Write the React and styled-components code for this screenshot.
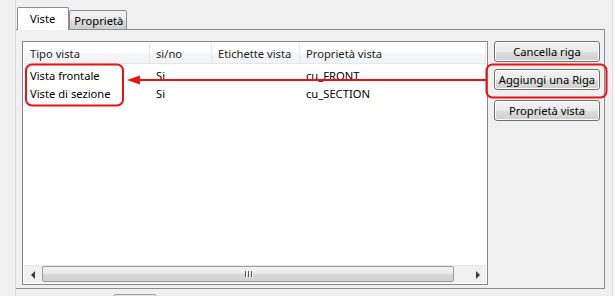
import React from "react";
import styled, { createGlobalStyle } from "styled-components";

const GlobalStyle = createGlobalStyle`
  html, body {
    margin: 0;
    padding: 0;
    background: #f0f0f0;
  }
  body {
    font-family: "Noto Sans", "Liberation Sans", sans-serif;
    font-size: 11.2px;
    color: #000;
  }
`;

const columns = [
  { title: "Tipo vista", width: 126 },
  { title: "si/no", width: 62 },
  { title: "Etichette vista", width: 88 },
  { title: "Proprietà vista", width: 0 },
];

const rows = [
  ["Vista frontale", "Si", "", "cu_FRONT"],
  ["Viste di sezione", "Si", "", "cu_SECTION"],
];

const App = () => {
  return (
    <>
      <GlobalStyle />
      <Frame>
        <TabBar>
          <Tab active>Viste</Tab>
          <Tab>Proprietà</Tab>
        </TabBar>
        <Panel>
          <Grid>
            <HeaderRow>
              {columns.map((c) => (
                <HeaderCell key={c.title} $w={c.width}>
                  {c.title}
                </HeaderCell>
              ))}
            </HeaderRow>
            {rows.map((r) => (
              <Row key={r[0]}>
                {r.map((v, i) => (
                  <Cell key={i} $w={columns[i].width}>
                    {v}
                  </Cell>
                ))}
              </Row>
            ))}
            <Filler />
            <HScroll>
              <ArrowBtn>
                <ArrowLeft />
              </ArrowBtn>
              <Thumb>
                <Grip>
                  <i />
                  <i />
                  <i />
                </Grip>
              </Thumb>
              <Track />
              <ArrowBtn>
                <ArrowRight />
              </ArrowBtn>
            </HScroll>
          </Grid>
          <Buttons>
            <Button>Cancella riga</Button>
            <Button $mt={7}>Aggiungi una Riga</Button>
            <Button $mt={10}>Proprietà vista</Button>
          </Buttons>
        </Panel>
        <BottomBar>
          <HiddenButton />
        </BottomBar>
        <Overlay width="614" height="296" viewBox="0 0 614 296">
          <rect x="26" y="64.5" width="97" height="41" rx="6" fill="none" stroke="#ee1111" strokeWidth="2" />
          <rect x="486.5" y="64.5" width="120" height="33" rx="6" fill="none" stroke="#ee1111" strokeWidth="2" />
          <line x1="137" y1="80" x2="486" y2="80" stroke="#ee1111" strokeWidth="2" />
          <polygon points="127,80 140,75.5 140,84.5" fill="#ee1111" />
        </Overlay>
      </Frame>
    </>
  );
};

export default App;

const Frame = styled.div`
  position: relative;
  width: 614px;
  height: 296px;
  box-sizing: border-box;
  padding: 7px 0 0 15px;
  overflow: hidden;
  display: flex;
  flex-direction: column;

  &::before {
    content: "";
    position: absolute;
    left: 15px;
    top: 0;
    bottom: 0;
    width: 1px;
    background: #d9d9d9;
  }

  &::after {
    content: "";
    position: absolute;
    right: 1px;
    top: 0;
    bottom: 0;
    width: 1px;
    background: #dfe3e8;
  }
`;

const TabBar = styled.div`
  display: flex;
  align-items: flex-end;
  height: 23px;
  flex-shrink: 0;
  padding-left: 2px;
  position: relative;
  z-index: 1;
  margin-bottom: -1px;
`;

const Tab = styled.div`
  box-sizing: border-box;
  height: ${(p) => (p.active ? "23px" : "20px")};
  padding: ${(p) => (p.active ? "3px 13px 0 12px" : "2px 3px 0 4px")};
  border: 1px solid #898c95;
  border-bottom: ${(p) => (p.active ? "none" : "1px solid #898c95")};
  border-radius: 2px 2px 0 0;
  background: ${(p) =>
    p.active ? "#ffffff" : "linear-gradient(#f3f3f3, #ebebeb 50%, #dddddd 51%, #cfcfcf)"};
  margin-left: ${(p) => (p.active ? "0" : "-1px")};
  margin-right: ${(p) => (p.active ? "1px" : "0")};
  color: #000;
  line-height: 16px;
`;

const Panel = styled.div`
  box-sizing: border-box;
  width: 590px;
  height: 260px;
  flex-shrink: 0;
  border: 1px solid #898c95;
  border-left: 1px solid #d9d9d9;
  background: #f0f0f0;
  display: flex;
  padding: 11px 0 0 6px;
  gap: 6px;
`;

const Grid = styled.div`
  box-sizing: border-box;
  width: 466px;
  height: 244px;
  border: 1px solid #828790;
  background: #fff;
  display: flex;
  flex-direction: column;
  padding: 1px;
`;

const HeaderRow = styled.div`
  display: flex;
  height: 20px;
  background: linear-gradient(#ffffff, #ffffff 50%, #f4f5f7 51%, #f3f4f6);
  border-bottom: 1px solid #e4e6ea;
`;

const HeaderCell = styled.div`
  box-sizing: border-box;
  ${(p) => (p.$w ? `width: ${p.$w}px;` : "flex: 1;")}
  padding-left: 6px;
  line-height: 21px;
  border-right: 1px solid #e3e5e8;
  color: #1e1e1e;
  white-space: nowrap;
`;

const Row = styled.div`
  display: flex;
  height: 18px;
`;

const Cell = styled.div`
  box-sizing: border-box;
  ${(p) => (p.$w ? `width: ${p.$w}px;` : "flex: 1;")}
  padding: 2px 0 0 6px;
  line-height: 20px;
  white-space: nowrap;
`;

const Filler = styled.div`
  flex: 1;
`;

const HScroll = styled.div`
  display: flex;
  height: 17px;
  background: #f0f0f0;
  border-top: 1px solid #e6e6e6;
`;

const ArrowBtn = styled.div`
  width: 17px;
  display: flex;
  align-items: center;
  justify-content: center;
`;

const ArrowLeft = styled.span`
  width: 0;
  height: 0;
  border-top: 4px solid transparent;
  border-bottom: 4px solid transparent;
  border-right: 4px solid #3c3c3c;
`;

const ArrowRight = styled.span`
  width: 0;
  height: 0;
  border-top: 4px solid transparent;
  border-bottom: 4px solid transparent;
  border-left: 4px solid #3c3c3c;
`;

const Thumb = styled.div`
  box-sizing: border-box;
  width: 412px;
  margin: 0 0 1px 1px;
  border: 1px solid #9b9b9b;
  border-radius: 2px;
  background: linear-gradient(#f4f4f4, #e8e8e8 50%, #d9d9d9 51%, #d2d2d2);
  display: flex;
  align-items: center;
  justify-content: center;
`;

const Grip = styled.div`
  display: flex;
  gap: 2px;

  i {
    width: 1px;
    height: 6px;
    background: #555;
    box-shadow: 1px 0 0 #fff;
  }
`;

const Track = styled.div`
  flex: 1;
`;

const Buttons = styled.div`
  display: flex;
  flex-direction: column;
  width: 106px;
`;

const Button = styled.div`
  box-sizing: border-box;
  height: 21px;
  margin-top: ${(p) => p.$mt || 0}px;
  border: 1px solid #707070;
  border-radius: 3px;
  background: linear-gradient(#f2f2f2, #ebebeb 50%, #dddddd 51%, #cfcfcf);
  box-shadow: inset 0 0 0 1px #fcfcfc;
  text-align: center;
  line-height: 19px;
  color: #000;
  white-space: nowrap;
`;

const BottomBar = styled.div`
  flex: 1;
  padding: 5px 0 0 98px;
`;

const HiddenButton = styled.div`
  width: 42px;
  height: 10px;
  border: 1px solid #a0a0a0;
  border-radius: 3px;
  background: #e6e6e6;
`;

const Overlay = styled.svg`
  position: absolute;
  left: 0;
  top: 0;
  pointer-events: none;
`;
